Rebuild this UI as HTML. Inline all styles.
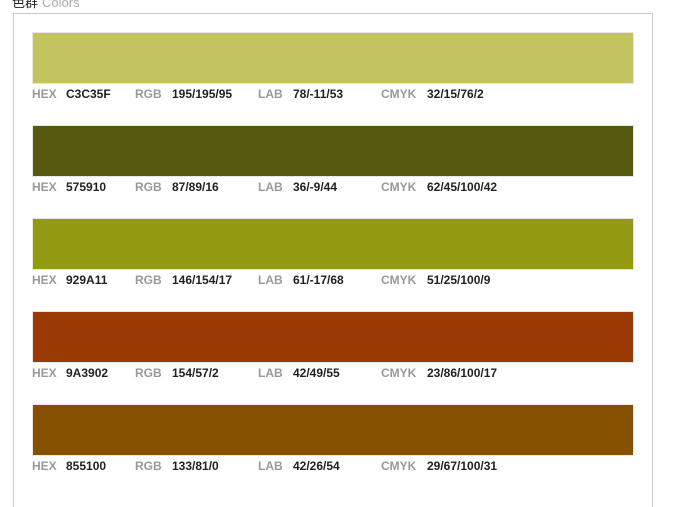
<!DOCTYPE html>
<html><head><meta charset="utf-8"><style>
html,body{margin:0;width:677px;height:507px;overflow:hidden;background:#fff;font-family:"Liberation Sans","Noto Sans CJK SC",sans-serif;position:relative}
.t{position:absolute;left:12px;top:-8px;font-size:13px;color:#222}
.t span{color:#aaa;margin-left:4px}
.box{position:absolute;left:13px;top:13px;width:638px;height:500px;border:1px solid #ccc}
.sw{position:absolute;left:32px;width:600px;height:50px;border:1px solid #e6e6e6}
.r{position:absolute;font-size:12px;font-weight:bold;height:14px;line-height:14px}
.l{color:#999}.v{color:#222}
</style></head><body>
<div class="t">色群<span>Colors</span></div>
<div class="box"></div>
<div class="sw" style="top:32px;background:#C3C35F"></div>
<div class="sw" style="top:125px;background:#575910"></div>
<div class="sw" style="top:218px;background:#929A11"></div>
<div class="sw" style="top:311px;background:#9A3902"></div>
<div class="sw" style="top:404px;background:#855100"></div>
<div class="r l" style="left:32px;top:87px">HEX</div><div class="r v" style="left:66px;top:87px">C3C35F</div><div class="r l" style="left:135px;top:87px">RGB</div><div class="r v" style="left:172px;top:87px">195/195/95</div><div class="r l" style="left:258px;top:87px">LAB</div><div class="r v" style="left:293px;top:87px">78/-11/53</div><div class="r l" style="left:381px;top:87px">CMYK</div><div class="r v" style="left:427px;top:87px">32/15/76/2</div>
<div class="r l" style="left:32px;top:180px">HEX</div><div class="r v" style="left:66px;top:180px">575910</div><div class="r l" style="left:135px;top:180px">RGB</div><div class="r v" style="left:172px;top:180px">87/89/16</div><div class="r l" style="left:258px;top:180px">LAB</div><div class="r v" style="left:293px;top:180px">36/-9/44</div><div class="r l" style="left:381px;top:180px">CMYK</div><div class="r v" style="left:427px;top:180px">62/45/100/42</div>
<div class="r l" style="left:32px;top:273px">HEX</div><div class="r v" style="left:66px;top:273px">929A11</div><div class="r l" style="left:135px;top:273px">RGB</div><div class="r v" style="left:172px;top:273px">146/154/17</div><div class="r l" style="left:258px;top:273px">LAB</div><div class="r v" style="left:293px;top:273px">61/-17/68</div><div class="r l" style="left:381px;top:273px">CMYK</div><div class="r v" style="left:427px;top:273px">51/25/100/9</div>
<div class="r l" style="left:32px;top:366px">HEX</div><div class="r v" style="left:66px;top:366px">9A3902</div><div class="r l" style="left:135px;top:366px">RGB</div><div class="r v" style="left:172px;top:366px">154/57/2</div><div class="r l" style="left:258px;top:366px">LAB</div><div class="r v" style="left:293px;top:366px">42/49/55</div><div class="r l" style="left:381px;top:366px">CMYK</div><div class="r v" style="left:427px;top:366px">23/86/100/17</div>
<div class="r l" style="left:32px;top:459px">HEX</div><div class="r v" style="left:66px;top:459px">855100</div><div class="r l" style="left:135px;top:459px">RGB</div><div class="r v" style="left:172px;top:459px">133/81/0</div><div class="r l" style="left:258px;top:459px">LAB</div><div class="r v" style="left:293px;top:459px">42/26/54</div><div class="r l" style="left:381px;top:459px">CMYK</div><div class="r v" style="left:427px;top:459px">29/67/100/31</div>
</body></html>
